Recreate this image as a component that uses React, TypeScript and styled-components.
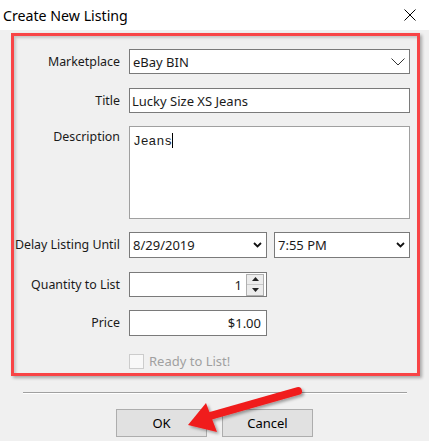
import React from "react";
import styled, { createGlobalStyle } from "styled-components";

const Global = createGlobalStyle`
  html, body { margin: 0; padding: 0; background: #f0f0f0; }
  body { font-family: "Noto Sans", "Open Sans", sans-serif; font-size: 12.4px; color: #1a1a1a; }
  * { box-sizing: border-box; }
`;

const Window = styled.div`
  position: relative;
  width: 429px;
  height: 441px;
  background: #f0f0f0;
  overflow: hidden;
`;

const TitleBar = styled.div`
  height: 30px;
  background: #ffffff;
  display: flex;
  align-items: center;
  justify-content: space-between;
  padding: 0 13px 0 3px;
`;

const TitleText = styled.span`
  font-size: 14.2px;
  color: #000;
  line-height: 20px;
  margin-top: 1px;
`;

const Body = styled.div`
  padding: 3px 9px 0 11px;
`;

const Frame = styled.div`
  height: 343px;
  border: 3px solid #f84446;
  box-shadow: 2px 2px 3px rgba(0, 0, 0, 0.3), inset 2px 2px 3px rgba(0, 0, 0, 0.18);
  padding: 13px 7px 0 0;
  display: flex;
  flex-direction: column;
`;

const Row = styled.div<{ $top?: number; $h?: number; $align?: string }>`
  display: grid;
  grid-template-columns: 106px 1fr;
  column-gap: 9px;
  margin-top: ${(p) => p.$top ?? 0}px;
  height: ${(p) => p.$h ?? 25}px;
  align-items: ${(p) => p.$align ?? "center"};
`;

const Label = styled.label<{ $pt?: number }>`
  text-align: right;
  white-space: nowrap;
  line-height: 16px;
  padding-top: ${(p) => p.$pt ?? 0}px;
  color: #1a1a1a;
`;

const Field = styled.div<{ $w?: number; $right?: boolean }>`
  height: 100%;
  width: ${(p) => (p.$w ? `${p.$w}px` : "100%")};
  background: #fff;
  border: 1px solid #7a7a7a;
  display: flex;
  align-items: center;
  justify-content: ${(p) => (p.$right ? "flex-end" : "flex-start")};
  padding: 0 ${(p) => (p.$right ? 5 : 2)}px 0 2px;
  line-height: 16px;
  font-size: 13px;
  white-space: nowrap;
`;

const Combo = styled(Field)`
  justify-content: space-between;
  padding: 0 4px 0 3px;
`;

const Memo = styled.div`
  height: 100%;
  background: #fff;
  border: 1px solid #a0a0a0;
  padding: 6px 3px;
  font-family: "Liberation Mono", "DejaVu Sans Mono", monospace;
  font-size: 13px;
  line-height: 16px;
`;

const Caret = styled.span`
  display: inline-block;
  width: 1px;
  height: 15px;
  background: #000;
  vertical-align: -3px;
`;

const Pair = styled.div`
  display: flex;
  gap: 7px;
  height: 100%;
`;

const Spin = styled.div`
  display: flex;
  flex-direction: column;
  width: 18px;
  height: 22px;
  margin-left: 4px;
  border: 1px solid #b0b0b0;
`;

const SpinHalf = styled.div`
  flex: 1;
  background: #ececec;
  display: flex;
  align-items: center;
  justify-content: center;
  & + & { border-top: 1px solid #c8c8c8; }
`;

const Check = styled.div`
  display: flex;
  align-items: center;
  gap: 5px;
  color: #a0a0a0;
  font-size: 13px;
`;

const Box = styled.span`
  width: 15px;
  height: 15px;
  border: 1px solid #cccccc;
  background: #f8f8f8;
`;

const Separator = styled.div`
  margin: 16px 22px 0 23px;
  height: 2px;
  border-top: 1px solid #a0a0a0;
  border-bottom: 1px solid #ffffff;
`;

const Buttons = styled.div`
  display: flex;
  justify-content: center;
  gap: 15px;
  margin-top: 15px;
`;

const Button = styled.button`
  width: 91px;
  height: 28px;
  background: #e1e1e1;
  border: 1px solid #adadad;
  font-family: inherit;
  font-size: 13px;
  color: #000;
  padding: 0;
`;

const Arrow = styled.svg`
  position: absolute;
  left: 0;
  top: 0;
  pointer-events: none;
`;

const ThinChevron = () => (
  <svg width="14" height="8" viewBox="0 0 14 8">
    <path d="M0.5 0.5 L7 7 L13.5 0.5" fill="none" stroke="#333" strokeWidth="1" />
  </svg>
);

const BoldChevron = () => (
  <svg width="9" height="6" viewBox="0 0 9 6">
    <path d="M1 1 L4.5 4.5 L8 1" fill="none" stroke="#111" strokeWidth="1.8" />
  </svg>
);

export default function App() {
  return (
    <Window>
      <Global />
      <TitleBar>
        <TitleText>Create New Listing</TitleText>
        <svg width="12" height="12" viewBox="0 0 12 12">
          <path d="M0.5 0.5 L11.5 11.5 M11.5 0.5 L0.5 11.5" stroke="#000" strokeWidth="1" />
        </svg>
      </TitleBar>
      <Body>
        <Frame>
          <Row>
            <Label>Marketplace</Label>
            <Combo>
              <span>eBay BIN</span>
              <ThinChevron />
            </Combo>
          </Row>
          <Row $top={14}>
            <Label>Title</Label>
            <Field>Lucky Size XS Jeans</Field>
          </Row>
          <Row $top={13} $h={93} $align="stretch">
            <Label $pt={3}>Description</Label>
            <Memo>
              Jeans<Caret />
            </Memo>
          </Row>
          <Row $top={13} $h={26}>
            <Label>Delay Listing Until</Label>
            <Pair>
              <Combo $w={138}>
                <span>8/29/2019</span>
                <BoldChevron />
              </Combo>
              <Combo style={{ flex: 1 }}>
                <span>7:55 PM</span>
                <BoldChevron />
              </Combo>
            </Pair>
          </Row>
          <Row $top={14}>
            <Label>Quantity to List</Label>
            <Field $w={138} $right style={{ paddingRight: 2 }}>
              <span>1</span>
              <Spin>
                <SpinHalf>
                  <svg width="7" height="4" viewBox="0 0 7 4"><path d="M0 4 L3.5 0 L7 4 Z" fill="#222" /></svg>
                </SpinHalf>
                <SpinHalf>
                  <svg width="7" height="4" viewBox="0 0 7 4"><path d="M0 0 L3.5 4 L7 0 Z" fill="#222" /></svg>
                </SpinHalf>
              </Spin>
            </Field>
          </Row>
          <Row $top={13} $h={26}>
            <Label>Price</Label>
            <Field $w={138} $right>$1.00</Field>
          </Row>
          <Row $top={16} $h={16}>
            <span />
            <Check>
              <Box />
              <span>Ready to List!</span>
            </Check>
          </Row>
        </Frame>
      </Body>
      <Separator />
      <Buttons>
        <Button>OK</Button>
        <Button>Cancel</Button>
      </Buttons>
      <Arrow width="429" height="441" viewBox="0 0 429 441">
        <defs>
          <filter id="sh" x="-20%" y="-20%" width="140%" height="140%">
            <feDropShadow dx="2" dy="2" stdDeviation="1.5" floodColor="#000" floodOpacity="0.35" />
          </filter>
        </defs>
        <g filter="url(#sh)">
          <line x1="298" y1="391" x2="210" y2="416" stroke="#f01c1c" strokeWidth="8" strokeLinecap="round" />
          <path d="M188 425 L206 403 L217 432 Z" fill="#f01c1c" />
        </g>
      </Arrow>
    </Window>
  );
}
